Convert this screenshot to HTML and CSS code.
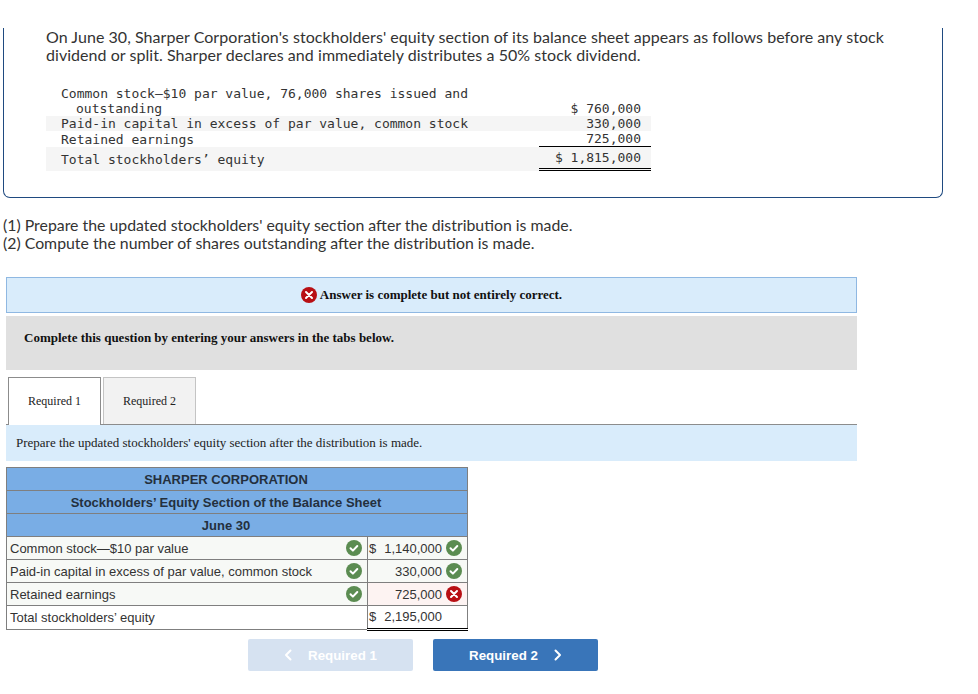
FILE: index.html
```html
<!DOCTYPE html>
<html lang="en">
<head>
<meta charset="utf-8">
<title>Stock dividend</title>
<link rel="stylesheet" href="styles.css">
</head>
<body>
<section class="card">
  <p class="intro">On June 30, Sharper Corporation's stockholders' equity section of its balance sheet appears as follows before any stock dividend or split. Sharper declares and immediately distributes a 50% stock dividend.</p>
  <table class="mono">
    <tr class="r1"><td class="lab">Common stock—$10 par value, 76,000 shares issued and<br><span class="ind">outstanding</span></td><td class="gap"></td><td class="num bot">$ 760,000</td></tr>
    <tr class="r2 shade"><td class="lab">Paid-in capital in excess of par value, common stock</td><td class="gap"></td><td class="num">330,000</td></tr>
    <tr class="r3"><td class="lab">Retained earnings</td><td class="gap"></td><td class="num under">725,000</td></tr>
    <tr class="r4 shade"><td class="lab">Total stockholders’ equity</td><td class="gap"></td><td class="num dbl">$ 1,815,000</td></tr>
  </table>
</section>
<div class="questions">
  <div>(1) Prepare the updated stockholders' equity section after the distribution is made.</div>
  <div>(2) Compute the number of shares outstanding after the distribution is made.</div>
</div>
<div class="banner">
  <svg class="ico" viewBox="0 0 16 16"><circle cx="8" cy="8" r="8" fill="#b80f14"/><path d="M5 5l6 6M11 5l-6 6" stroke="#fff" stroke-width="2" stroke-linecap="round"/></svg>
  <b>Answer is complete but not entirely correct.</b>
</div>
<div class="complete"><b>Complete this question by entering your answers in the tabs below.</b></div>
<div class="tabs">
  <div class="tab active">Required 1</div>
  <div class="tab">Required 2</div>
</div>
<div class="panel">Prepare the updated stockholders' equity section after the distribution is made.</div>
<table class="answer">
  <colgroup><col class="col-lab"><col class="col-val"></colgroup>
  <tr class="head"><td colspan="2">SHARPER CORPORATION</td></tr>
  <tr class="head"><td colspan="2">Stockholders’ Equity Section of the Balance Sheet</td></tr>
  <tr class="head"><td colspan="2">June 30</td></tr>
  <tr>
    <td class="a-lab"><div class="cell"><span>Common stock—$10 par value</span><svg class="ico" viewBox="0 0 16 16"><circle cx="8" cy="8" r="8" fill="#5b8c51"/><path d="M4.5 8.3l2.4 2.3 4.4-4.6" fill="none" stroke="#fff" stroke-width="2" stroke-linecap="round" stroke-linejoin="round"/></svg></div></td>
    <td class="a-val"><div class="cell"><span class="dollar">$</span><span class="amt">1,140,000</span><svg class="ico" viewBox="0 0 16 16"><circle cx="8" cy="8" r="8" fill="#5b8c51"/><path d="M4.5 8.3l2.4 2.3 4.4-4.6" fill="none" stroke="#fff" stroke-width="2" stroke-linecap="round" stroke-linejoin="round"/></svg></div></td>
  </tr>
  <tr>
    <td class="a-lab"><div class="cell"><span>Paid-in capital in excess of par value, common stock</span><svg class="ico" viewBox="0 0 16 16"><circle cx="8" cy="8" r="8" fill="#5b8c51"/><path d="M4.5 8.3l2.4 2.3 4.4-4.6" fill="none" stroke="#fff" stroke-width="2" stroke-linecap="round" stroke-linejoin="round"/></svg></div></td>
    <td class="a-val"><div class="cell"><span class="amt">330,000</span><svg class="ico" viewBox="0 0 16 16"><circle cx="8" cy="8" r="8" fill="#5b8c51"/><path d="M4.5 8.3l2.4 2.3 4.4-4.6" fill="none" stroke="#fff" stroke-width="2" stroke-linecap="round" stroke-linejoin="round"/></svg></div></td>
  </tr>
  <tr>
    <td class="a-lab"><div class="cell"><span>Retained earnings</span><svg class="ico" viewBox="0 0 16 16"><circle cx="8" cy="8" r="8" fill="#5b8c51"/><path d="M4.5 8.3l2.4 2.3 4.4-4.6" fill="none" stroke="#fff" stroke-width="2" stroke-linecap="round" stroke-linejoin="round"/></svg></div></td>
    <td class="a-val wrong"><div class="cell"><span class="amt">725,000</span><svg class="ico" viewBox="0 0 16 16"><circle cx="8" cy="8" r="8" fill="#b80f14"/><path d="M5 5l6 6M11 5l-6 6" stroke="#fff" stroke-width="2" stroke-linecap="round"/></svg></div></td>
  </tr>
  <tr class="total">
    <td class="a-lab"><div class="cell"><span>Total stockholders’ equity</span></div></td>
    <td class="a-val"><div class="cell raised"><span class="dollar">$</span><span class="amt">2,195,000</span><span class="ico"></span></div></td>
  </tr>
</table>
<nav class="nav">
  <div class="btn off"><svg class="chev" viewBox="0 0 8 12"><path d="M6.5 1.5L2 6l4.500 4.500" fill="none" stroke="currentColor" stroke-width="2" stroke-linecap="round" stroke-linejoin="round"/></svg><span>Required 1</span></div>
  <div class="btn on"><span>Required 2</span><svg class="chev" viewBox="0 0 8 12"><path d="M1.500 1.500L6 6l-4.500 4.500" fill="none" stroke="currentColor" stroke-width="2" stroke-linecap="round" stroke-linejoin="round"/></svg></div>
</nav>
</body>
</html>
```
FILE: styles.css
```css
* { box-sizing: border-box; }
html, body { margin: 0; padding: 0; background: #fff; }
body { width: 978px; height: 694px; overflow: hidden; padding-top: 28px; font-family: "Liberation Serif", serif; color: #1a1a1a; }
.card { width: 940px; height: 170px; margin-left: 3px; border: 1px solid #1f4a80; border-top: 0; border-radius: 0 0 7px 7px; padding: 0 42px; }
.intro { margin: 0; width: 850px; font: 16px/18px Lato, sans-serif; letter-spacing: 0.05px; color: #333; }
.mono { margin-top: 22px; width: 605px; border-collapse: separate; border-spacing: 0; font: 13px/15px "DejaVu Sans Mono", monospace; color: #333; }
.mono td { padding: 0; vertical-align: bottom; }
.lab { padding-left: 15px !important; width: 438px; white-space: nowrap; }
.ind { padding-left: 15px; }
.gap { width: 55px; }
.num { width: 112px; text-align: right; padding-right: 10px !important; }
.shade { background: #f5f5f5; }
.r2 td { height: 15px; }
.r3 td { height: 16px; }
.r4 td { height: 24px; vertical-align: middle; }
.under { border-bottom: 1px solid #000; }
.dbl { border-bottom: 3px double #000; }
.questions { margin-top: 18px; padding-left: 3px; font: 15.85px/17.500px Lato, sans-serif; color: #333; }
.banner { margin: 26px 0 0 6px; width: 851px; height: 36px; background: #d9ecfb; border: 1px solid #8fb8e2; display: flex; align-items: center; justify-content: center; gap: 3px; font-size: 13px; color: #111; }
.ico { width: 16px; height: 16px; flex: none; display: block; }
.complete { margin: 3px 0 0 6px; width: 851px; height: 54px; background: #e0e0e0; padding: 14px 18px; font-size: 13px; line-height: 15px; color: #111; }
.tabs { margin: 7px 0 0 6px; width: 851px; height: 48px; padding-left: 2px; display: flex; gap: 2px; border-bottom: 1px solid #8c8c8c; font-size: 12px; }
.tab { width: 93px; height: 47px; background: #f2f2f2; border: 1px solid #c4c4c4; border-bottom: 0; display: flex; align-items: center; justify-content: center; color: #222; }
.tab.active { background: #fff; border: 1px solid #8c8c8c; border-bottom: 0; height: 48px; margin-bottom: -1px; position: relative; }
.panel { margin-left: 6px; width: 851px; height: 36px; background: #d9ecfb; padding: 10px; font-size: 13px; line-height: 16px; color: #222; }
.answer { margin: 6px 0 0 6px; width: 461px; border-collapse: collapse; font: 13px/15px "Liberation Sans", sans-serif; color: #333; table-layout: fixed; }
.col-lab { width: 361px; }
.col-val { width: 100px; }
.answer td { border: 1px solid #7f7f7f; height: 23px; padding: 0; }
.head td { background: #79ade5; text-align: center; font-weight: bold; color: #24303e; padding-right: 22px; }
.a-lab { background: #f7f9f6; }
.a-val { background: #f7f9f6; }
.cell { display: flex; align-items: center; padding: 0 5px 0 1px; height: 22px; }
.a-lab .cell { padding-left: 3px; justify-content: space-between; white-space: nowrap; }
.cell.raised { padding-bottom: 2px; }
.amt { margin-left: auto; margin-right: 4px; }
.wrong { background: #fdf3f2; }
.total .a-lab { background: #fff; }
.total .a-val { background: #fff; border-top: 1px solid #000; border-bottom: 3px double #000; }
.nav { margin-top: 8px; padding-left: 248px; display: flex; gap: 20px; }
.btn { width: 165px; height: 32px; border-radius: 2px; display: flex; align-items: center; justify-content: center; gap: 16px; font: bold 13.33px/15px "Liberation Sans", sans-serif; color: #fff; }
.off { background: #d6e2f1; }
.on { background: #3975b9; }
.chev { width: 8px; height: 12px; display: block; }
```
